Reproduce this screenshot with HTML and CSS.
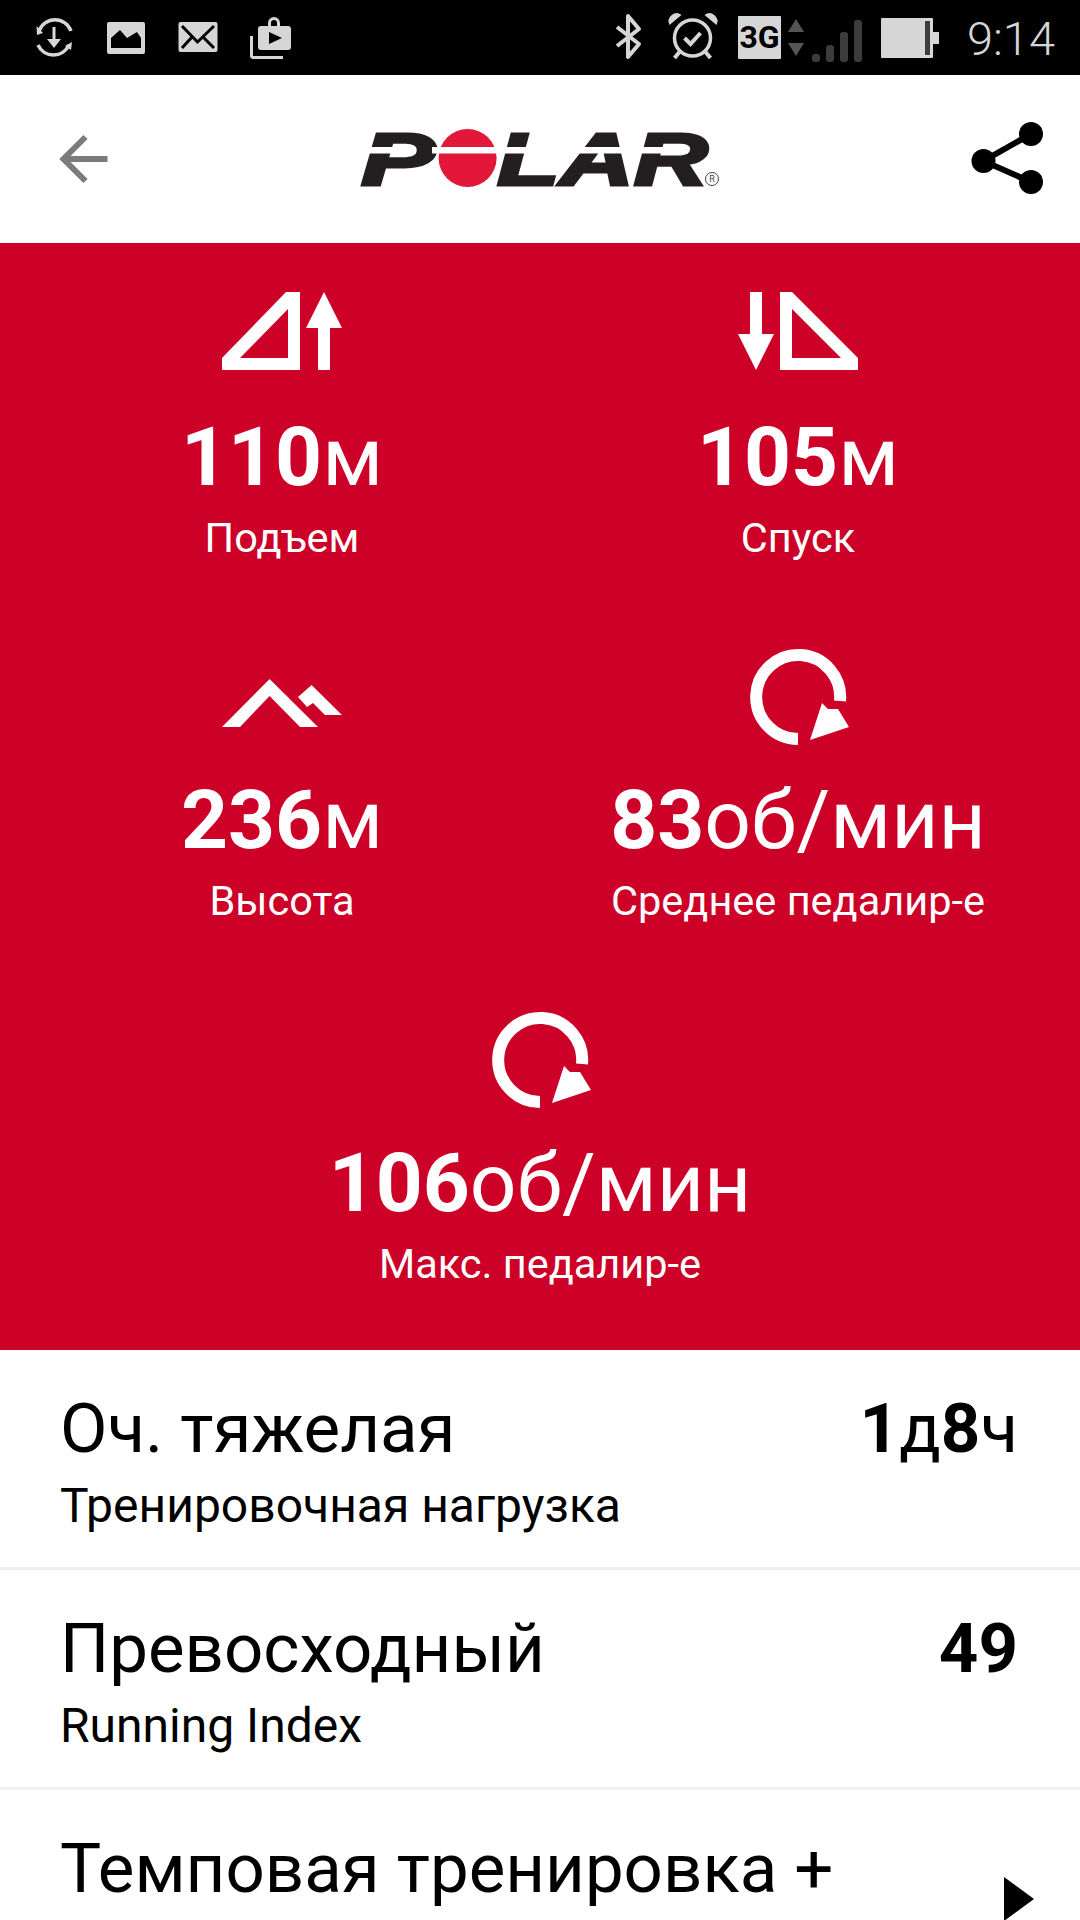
FILE: index.html
```html
<!DOCTYPE html>
<html lang="ru">
<head>
<meta charset="utf-8">
<title>Polar</title>
<link rel="stylesheet" href="styles.css">
</head>
<body>
<div class="page">
  <div class="status">
    <div class="status-group">
      <svg class="si" width="38" height="75" viewBox="34 0 38 75"><g fill="none" stroke="#d6d6d6" stroke-width="3.5"><path d="M37 31A17 17 0 0 1 69 31"/><path d="M67 45A17 17 0 0 1 36 45"/><path d="M52 27V42" stroke-width="3"/></g><path d="M34.500 26L41 33L35 35ZM70 42L63 46L69 50ZM45 39H59L52 48Z" fill="#d6d6d6"/></svg>
      <svg class="si" width="40" height="75" viewBox="102 0 40 75"><path fill-rule="evenodd" d="M103 24a2 2 0 0 1 2-2H139a2 2 0 0 1 2 2V52a2 2 0 0 1-2 2H105a2 2 0 0 1-2-2ZM107 48H137V38L133 32L123 38L116 30L107 38Z" fill="#d6d6d6"/></svg>
      <svg class="si" width="40" height="75" viewBox="172 0 40 75"><rect x="172.500" y="22" width="39" height="30" rx="2" fill="#d6d6d6"/><path d="M176 26L191.500 42L208 26M176 48L186 37M208 48L197 37" fill="none" stroke="#000" stroke-width="3"/></svg>
      <svg class="si" width="42" height="75" viewBox="241 0 42 75"><path d="M242.500 36V56a1.500 1.500 0 0 0 1.500 1.500H274" fill="none" stroke="#d6d6d6" stroke-width="3"/><path fill-rule="evenodd" d="M252 26H259V23a6 6 0 0 1 12 0V26H279a3 3 0 0 1 3 3V47a3 3 0 0 1-3 3H252a3 3 0 0 1-3-3V29a3 3 0 0 1 3-3ZM262 26H268V23a3 3 0 0 0-6 0ZM260 32V44L273 38Z" fill="#d6d6d6"/></svg>
    </div>
    <div class="status-group status-right">
      <svg width="50" height="75" viewBox="600 0 50 75"><path d="M615 27L637 44L626 57V16L637 29L615 46" fill="none" stroke="#d6d6d6" stroke-width="4" stroke-linejoin="round"/></svg>
      <svg width="73" height="75" viewBox="647.500 0 73 75"><g fill="none" stroke="#d6d6d6"><circle cx="688" cy="38" r="18" stroke-width="3.500"/><path d="M680 38L686 44L696 33" stroke-width="4"/><path d="M675 52L670 58M701 52L706 58" stroke-width="4"/></g><path d="M665 25A8 8 0 0 1 677 15ZM712 25A8 8 0 0 0 700 15Z" fill="#d6d6d6"/></svg>
      <svg width="80" height="75" viewBox="719 0 80 75"><rect x="732" y="16" width="43" height="43" rx="1" fill="#d6d6d6"/><text class="net-text" x="753.500" y="48">3G</text><path d="M790 19L798 32H782ZM790 56L782 43H798Z" fill="#555"/></svg>
      <svg width="65" height="75" viewBox="805 0 65 75"><g fill="#3c3c3c"><rect x="812" y="54" width="8" height="8" rx="3"/><rect x="826" y="45" width="8" height="17" rx="3"/><rect x="840" y="32" width="8" height="30" rx="3"/><rect x="854" y="20" width="8" height="42" rx="3"/></g></svg>
      <svg width="75" height="75" viewBox="870 0 75 75"><rect x="881" y="18" width="52" height="40" rx="1" fill="#d6d6d6"/><rect x="933" y="32" width="6" height="12" fill="#d6d6d6"/><rect x="925" y="21" width="5" height="34" fill="#3c3c3c"/></svg>
      <span class="time">9:14</span>
    </div>
  </div>

  <header class="topbar">
    <svg class="back" width="80" height="168" viewBox="33.500 75 80 168"><path d="M105 159H62M83 137L61 159L83 181" fill="none" stroke="#7b7b7b" stroke-width="6"/></svg>
    <svg class="logo" width="360" height="168" viewBox="360 75 360 168">
      <text class="logo-text" x="361" y="185" textLength="74" lengthAdjust="spacingAndGlyphs">P</text>
      <circle cx="467.600" cy="158" r="29" fill="#e2173a"/>
      <text class="logo-text" x="497" y="185" textLength="211" lengthAdjust="spacingAndGlyphs">LAR</text>
      <rect class="logo-band" x="360" y="147" width="56" height="6.500"/>
      <rect class="logo-band" x="432" y="147" width="256" height="6.500"/>
      <circle cx="712" cy="179" r="6.500" fill="none" stroke="#444" stroke-width="1"/>
      <text class="logo-r" x="712" y="182">R</text>
    </svg>
    <svg class="share" width="80" height="168" viewBox="964 75 80 168"><g fill="#000"><circle cx="1031" cy="134" r="12"/><circle cx="983.500" cy="161" r="12"/><circle cx="1031" cy="182" r="12"/></g><path d="M1031 134L983.500 161L1031 182" fill="none" stroke="#000" stroke-width="6"/></svg>
  </header>

  <section class="stats">
    <div class="stat">
      <svg class="stat-icon" viewBox="0 0 120 120"><path fill-rule="evenodd" d="M0 90L64 24H78V102H0ZM18 90H66V41Z"/><path d="M102 24L120 60H108V102H96V60H84Z"/></svg>
      <div class="stat-value"><b>110</b>м</div>
      <div class="stat-label">Подъем</div>
    </div>
    <div class="stat">
      <svg class="stat-icon" viewBox="0 0 120 120"><path d="M12 24H24V66H36L18 102L0 66H12Z"/><path fill-rule="evenodd" d="M42 24H54L120 90V102H42ZM54 41V90H103Z"/></svg>
      <div class="stat-value"><b>105</b>м</div>
      <div class="stat-label">Спуск</div>
    </div>
    <div class="stat">
      <svg class="stat-icon" viewBox="0 0 120 120"><path d="M0 96L47.600 48L96 96H78L47.600 65L18 96Z"/><path d="M76 66L89.600 54L120 84H103L91 72L85 76Z"/></svg>
      <div class="stat-value"><b>236</b>м</div>
      <div class="stat-label">Высота</div>
    </div>
    <div class="stat">
      <svg class="stat-icon" viewBox="0 0 120 120"><path d="M60 108A42 42 0 1 1 102 70" fill="none" stroke="#fff" stroke-width="12"/><path d="M84 72L90 78H100L111 96L72 109Z"/></svg>
      <div class="stat-value"><b>83</b>об/мин</div>
      <div class="stat-label">Среднее педалир-е</div>
    </div>
    <div class="stat stat-wide">
      <svg class="stat-icon" viewBox="0 0 120 120"><path d="M60 108A42 42 0 1 1 102 70" fill="none" stroke="#fff" stroke-width="12"/><path d="M84 72L90 78H100L111 96L72 109Z"/></svg>
      <div class="stat-value"><b>106</b>об/мин</div>
      <div class="stat-label">Макс. педалир-е</div>
    </div>
  </section>

  <section class="rows">
    <div class="row">
      <div>
        <div class="row-title">Оч. тяжелая</div>
        <div class="row-sub">Тренировочная нагрузка</div>
      </div>
      <div class="row-value"><b>1</b>д<b>8</b>ч</div>
    </div>
    <div class="row">
      <div>
        <div class="row-title">Превосходный</div>
        <div class="row-sub">Running Index</div>
      </div>
      <div class="row-value"><b>49</b></div>
    </div>
    <div class="row row-last">
      <div>
        <div class="row-title">Темповая тренировка +</div>
      </div>
      <svg class="play" width="30" height="44" viewBox="0 0 30 44"><path d="M0 0L30 22L0 44Z" fill="#000"/></svg>
    </div>
  </section>
</div>
</body>
</html>
```

FILE: styles.css
```css
* { box-sizing: border-box; }
html, body { margin: 0; padding: 0; }
body { width: 1080px; height: 1920px; overflow: hidden; background: #fff; font-family: Roboto, "Noto Sans", sans-serif; color: #000; }
.page { width: 1080px; height: 1920px; overflow: hidden; display: flex; flex-direction: column; }

.status { height: 75px; flex: none; background: #000; display: flex; justify-content: space-between; padding: 0 25px 0 36px; }
.status-group { display: flex; align-items: center; gap: 32px; }
.status-right { gap: 0; }
.status svg { display: block; flex: none; }
.net-text { font: 700 32px Roboto, sans-serif; fill: #000; text-anchor: middle; }
.time { width: 110px; text-align: right; font-weight: 300; font-size: 47px; line-height: 75px; color: #d6d6d6; padding-top: 2px; }

.topbar { height: 168px; flex: none; display: flex; justify-content: space-between; padding: 0 36px; align-items: center; }
.topbar svg { display: block; flex: none; }
.logo-text { font: italic 700 75px "Liberation Sans", sans-serif; fill: #231f20; stroke: #231f20; stroke-width: 3px; }
.logo-band { fill: #fff; }
.logo-r { font: 400 9px Roboto, sans-serif; fill: #444; text-anchor: middle; }

.stats { height: 1107px; flex: none; background: #cd0027; color: #fff; padding: 25px 24px 0; display: grid; grid-template-columns: 516px 516px; grid-auto-rows: 363px; }
.stat { display: flex; flex-direction: column; align-items: center; }
.stat-wide { grid-column: 1 / -1; }
.stat-icon { width: 120px; height: 120px; display: block; fill: #fff; flex: none; }
.stat-value { font-size: 82px; line-height: 100px; margin-top: 19px; white-space: nowrap; }
.stat-value b { font-weight: 700; }
.stat-label { font-size: 41.500px; line-height: 48px; margin-top: 7px; white-space: nowrap; }

.rows { flex: 1; }
.row { height: 220px; border-bottom: 3px solid #f0f0f0; display: flex; justify-content: space-between; padding: 39px 62px 0 60px; }
.row-last { border-bottom: 0; }
.row-title { font-size: 69px; line-height: 80px; white-space: nowrap; }
.row-sub { font-size: 48px; line-height: 56px; margin-top: 9px; white-space: nowrap; }
.row-value { font-size: 69px; line-height: 80px; white-space: nowrap; }
.row-value b { font-weight: 700; }
.play { margin: 48px -16px 0 0; flex: none; display: block; }
```
